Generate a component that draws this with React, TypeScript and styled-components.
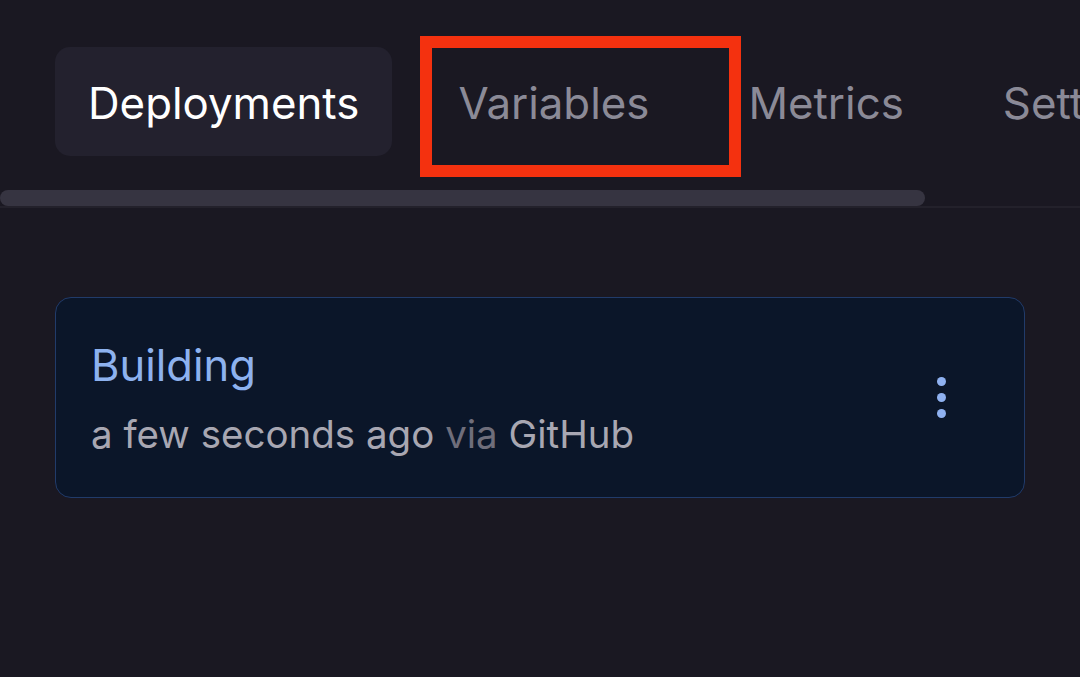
import { FC } from 'react';
import styled, { createGlobalStyle, css } from 'styled-components';

const GlobalStyle = createGlobalStyle`
  html, body {
    margin: 0;
    padding: 0;
    background: #1a1822;
  }
  body {
    font-family: Inter, "Noto Sans", sans-serif;
    -webkit-font-smoothing: antialiased;
  }
`;

const Page = styled.div`
  width: 1080px;
  height: 677px;
  overflow: hidden;
  background: #1a1822;
`;

const TabBar = styled.nav`
  border-bottom: 2px solid #23212b;
`;

const TabRow = styled.div`
  display: flex;
  gap: 33px;
  padding: 47px 0 34px 55px;
  white-space: nowrap;
  overflow: hidden;
`;

interface TabProps {
  readonly $active?: boolean;
}

const Tab = styled.div<TabProps>`
  position: relative;
  flex: none;
  display: flex;
  align-items: center;
  box-sizing: border-box;
  height: 109px;
  padding: 4px 33px 0;
  border-radius: 15px;
  font-size: 43.8px;
  color: #8b8a97;

  ${({ $active }) =>
    $active &&
    css`
      background: #23212e;
      color: #ffffff;
    `}
`;

const Highlight = styled.span`
  position: absolute;
  left: -5px;
  top: -11px;
  width: 321px;
  height: 141px;
  box-sizing: border-box;
  border: 12px solid #f4310f;
  pointer-events: none;
`;

const ScrollTrack = styled.div`
  height: 16px;
`;

const ScrollThumb = styled.div`
  width: 925px;
  height: 100%;
  border-radius: 8px;
  background: #363441;
`;

const Content = styled.main`
  padding: 89px 55px 0;
`;

const Card = styled.div`
  display: flex;
  align-items: center;
  justify-content: space-between;
  height: 201px;
  box-sizing: border-box;
  padding: 0 78px 0 35px;
  border: 1.5px solid #213b6a;
  border-radius: 16px;
  background: #0b1629;
`;

const CardText = styled.div`
  display: flex;
  flex-direction: column;
  gap: 19px;
`;

const Status = styled.div`
  font-size: 43.5px;
  line-height: 54px;
  color: #8db2ef;
`;

const Meta = styled.div`
  font-size: 38.5px;
  line-height: 46px;
  color: #a8a7b2;
`;

const Muted = styled.span`
  color: #6f6e7b;
`;

const MenuButton = styled.button`
  display: flex;
  flex-direction: column;
  align-items: center;
  gap: 7px;
  padding: 0;
  border: none;
  background: none;
  cursor: pointer;
`;

const Dot = styled.span`
  width: 9px;
  height: 9px;
  border-radius: 50%;
  background: #8fb1f0;
`;

const tabs = ['Deployments', 'Variables', 'Metrics', 'Settings'];

const App: FC = () => (
  <Page>
    <GlobalStyle />
    <TabBar>
      <TabRow>
        {tabs.map((t, i) => (
          <Tab key={t} $active={i === 0}>
            {t}
            {t === 'Variables' && <Highlight />}
          </Tab>
        ))}
      </TabRow>
      <ScrollTrack>
        <ScrollThumb />
      </ScrollTrack>
    </TabBar>

    <Content>
      <Card>
        <CardText>
          <Status>Building</Status>
          <Meta>
            a few seconds ago <Muted>via</Muted> GitHub
          </Meta>
        </CardText>
        <MenuButton aria-label="More">
          <Dot />
          <Dot />
          <Dot />
        </MenuButton>
      </Card>
    </Content>
  </Page>
);

export default App;
